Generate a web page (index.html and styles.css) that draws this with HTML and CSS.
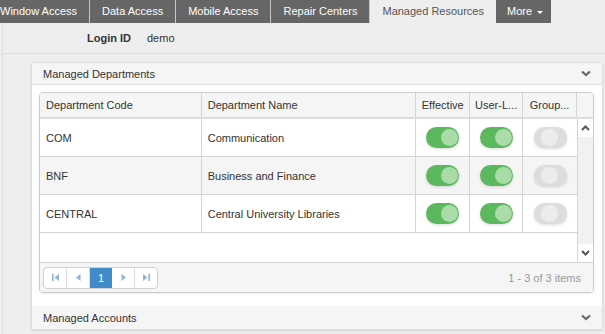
FILE: index.html
```html
<!DOCTYPE html>
<html lang="en">
<head>
  <meta charset="UTF-8">
  <title>Managed Resources</title>
  <link rel="stylesheet" href="styles.css">
</head>

<body>
  <nav class="tabs">
    <span class="tab">Window Access</span>
    <span class="tab">Data Access</span>
    <span class="tab">Mobile Access</span>
    <span class="tab">Repair Centers</span>
    <span class="tab active">Managed Resources</span>
    <span class="tab more">More <i class="caret"></i></span>
  </nav>

  <div class="page">
    <div class="login-row">
      <span class="login-label">Login ID</span>
      <span class="login-value">demo</span>
    </div>

    <div class="content">
      <div class="panelbar">
        <div class="panel-header">
          <span>Managed Departments</span>
          <svg class="chev" width="10" height="7" viewBox="0 0 10 7"><polyline points="1,1.5 5,5 9,1.5" /></svg>
        </div>

        <div class="panel-body">
          <div class="grid">
            <div class="grid-head">
              <div class="cell c-code">Department Code</div>
              <div class="cell c-name">Department Name</div>
              <div class="cell c-flag">Effective</div>
              <div class="cell c-flag2">User-L...</div>
              <div class="cell c-flag">Group...</div>
              <div class="cell c-scroll"></div>
            </div>

            <div class="grid-body">
              <div class="rows">
                <div class="row">
                  <div class="cell c-code">COM</div>
                  <div class="cell c-name">Communication</div>
                  <div class="cell c-flag"><span class="switch on"></span></div>
                  <div class="cell c-flag2"><span class="switch on"></span></div>
                  <div class="cell c-flag"><span class="switch off"></span></div>
                </div>
                <div class="row alt">
                  <div class="cell c-code">BNF</div>
                  <div class="cell c-name">Business and Finance</div>
                  <div class="cell c-flag"><span class="switch on"></span></div>
                  <div class="cell c-flag2"><span class="switch on"></span></div>
                  <div class="cell c-flag"><span class="switch off"></span></div>
                </div>
                <div class="row">
                  <div class="cell c-code">CENTRAL</div>
                  <div class="cell c-name">Central University Libraries</div>
                  <div class="cell c-flag"><span class="switch on"></span></div>
                  <div class="cell c-flag2"><span class="switch on"></span></div>
                  <div class="cell c-flag"><span class="switch off"></span></div>
                </div>
              </div>
              <div class="scrollbar">
                <span class="arrow"><svg width="9" height="6" viewBox="0 0 9 6"><polyline points="1,5 4.5,1.5 8,5" /></svg></span>
                <span class="arrow"><svg width="9" height="6" viewBox="0 0 9 6"><polyline points="1,1 4.5,4.5 8,1" /></svg></span>
              </div>
            </div>

            <div class="pager">
              <div class="pager-nav">
                <span class="pbtn"><svg width="9" height="9" viewBox="0 0 9 9"><rect x="1" y="1" width="1.6" height="7" /><polygon points="8,1 8,8 3.5,4.5" /></svg></span>
                <span class="pbtn"><svg width="9" height="9" viewBox="0 0 9 9"><polygon points="6.5,1 6.5,8 2,4.5" /></svg></span>
                <span class="pbtn current">1</span>
                <span class="pbtn"><svg width="9" height="9" viewBox="0 0 9 9"><polygon points="2.5,1 2.5,8 7,4.5" /></svg></span>
                <span class="pbtn"><svg width="9" height="9" viewBox="0 0 9 9"><polygon points="1,1 1,8 5.5,4.5" /><rect x="6.4" y="1" width="1.6" height="7" /></svg></span>
              </div>
              <span class="pager-info">1 - 3 of 3 items</span>
            </div>
          </div>
        </div>

        <div class="panel-header last">
          <span>Managed Accounts</span>
          <svg class="chev" width="10" height="7" viewBox="0 0 10 7"><polyline points="1,1.5 5,5 9,1.5" /></svg>
        </div>
      </div>
    </div>
  </div>
</body>
</html>
```

FILE: styles.css
```css
body {
  margin: 0;
  background-color: #eeeeee;
  font-family: "Liberation Sans", Arial, sans-serif;
  font-size: 11px;
  color: #333;
  overflow: hidden;
}

/* top tabs */
.tabs {
  display: inline-flex;
  margin-left: -12px;
  background-color: #666666;
  height: 23px;
}

.tab {
  padding: 0 12px;
  line-height: 23px;
  font-size: 11px;
  color: #ffffff;
  border-right: 1px solid #c8c8c8;
  white-space: nowrap;
}

.tab.active {
  background-color: #eeeeee;
  color: #555;
  border-right: none;
}

.tab.more {
  border-right: none;
  padding: 0 8px 0 11px;
}

.caret {
  display: inline-block;
  width: 0;
  height: 0;
  margin-left: 2px;
  vertical-align: middle;
  border-top: 3px solid #fff;
  border-left: 3px solid transparent;
  border-right: 3px solid transparent;
}

.page {
  margin-left: 2px;
  border-left: 1px solid #dddddd;
  height: 320px;
}

.login-row {
  display: flex;
  align-items: center;
  gap: 16px;
  height: 30px;
  padding-left: 84px;
  border-bottom: 1px solid #dddddd;
}

.login-label {
  font-weight: bold;
}

.content {
  padding: 8px 2px 0 28px;
}

/* panel bar */
.panelbar {
  background-color: #ffffff;
  border: 1px solid #dddddd;
  border-radius: 3px;
  box-shadow: 0 1px 2px rgba(0, 0, 0, 0.12);
}

.panel-header {
  display: flex;
  justify-content: space-between;
  align-items: center;
  height: 21px;
  padding: 0 11px;
  background-color: #f5f5f5;
  border-bottom: 1px solid #e2e2e2;
}

.panel-header.last {
  border-bottom: none;
  height: 23px;
}

.chev {
  fill: none;
  stroke: #666;
  stroke-width: 2.2;
}

.panel-body {
  padding: 7px 8px 13px 7px;
}

/* grid */
.grid {
  border: 1px solid #cccccc;
  border-radius: 4px;
  overflow: hidden;
  box-shadow: 0 1px 2px rgba(0, 0, 0, 0.08);
}

.grid-head {
  display: flex;
  height: 24px;
  background-color: #f5f5f5;
  border-bottom: 2px solid #dddddd;
}

.cell {
  box-sizing: border-box;
  display: flex;
  align-items: center;
  padding: 0 6px;
  border-right: 1px solid #d4d4d4;
  white-space: nowrap;
  overflow: hidden;
}

.c-code { width: 162px; }
.c-name { width: 215px; }
.c-flag { width: 54px; justify-content: center; }
.c-flag2 { width: 53px; justify-content: center; }
.c-scroll { width: 16px; border-right: none; }

.grid-body {
  display: flex;
  height: 143px;
}

.rows {
  width: 538px;
  border-right: 1px solid #d4d4d4;
  box-sizing: border-box;
}

.row {
  display: flex;
  height: 37px;
  border-bottom: 1px solid #d4d4d4;
}

.row .cell:last-child {
  border-right: none;
}

.row.alt {
  background-color: #f5f5f5;
}

.scrollbar {
  width: 16px;
  display: flex;
  flex-direction: column;
  justify-content: space-between;
  background-color: #f1f1f1;
}

.arrow {
  display: flex;
  justify-content: center;
  align-items: center;
  height: 18px;
  background-color: #ffffff;
}

.arrow svg {
  fill: none;
  stroke: #555;
  stroke-width: 2;
}

/* toggle switches */
.switch {
  position: relative;
  display: inline-block;
  width: 33px;
  height: 21px;
  border-radius: 11px;
  box-shadow: 0 1px 3px rgba(0, 0, 0, 0.15);
}

.switch::after {
  content: "";
  position: absolute;
  top: 2px;
  width: 17px;
  height: 17px;
  border-radius: 50%;
}

.switch.on {
  background-color: #5cb85c;
}

.switch.on::after {
  right: 1px;
  background-color: #a9dca9;
}

.switch.off {
  background-color: #dddddd;
}

.switch.off::after {
  left: 7px;
  background-color: #ececec;
}

/* pager */
.pager {
  display: flex;
  justify-content: space-between;
  align-items: center;
  height: 29px;
  padding: 0 12px 0 3px;
  background-color: #f5f5f5;
  border-top: 1px solid #d4d4d4;
}

.pager-nav {
  display: flex;
  border: 1px solid #d0d0d0;
  border-radius: 4px;
  overflow: hidden;
  background-color: #ffffff;
}

.pbtn {
  display: flex;
  justify-content: center;
  align-items: center;
  width: 22px;
  height: 20px;
  border-right: 1px solid #dcdcdc;
  fill: #8fb4d6;
}

.pbtn:last-child {
  border-right: none;
}

.pbtn.current {
  background-color: #428bca;
  color: #ffffff;
  border-right: none;
}

.pager-info {
  color: #999999;
}
```
